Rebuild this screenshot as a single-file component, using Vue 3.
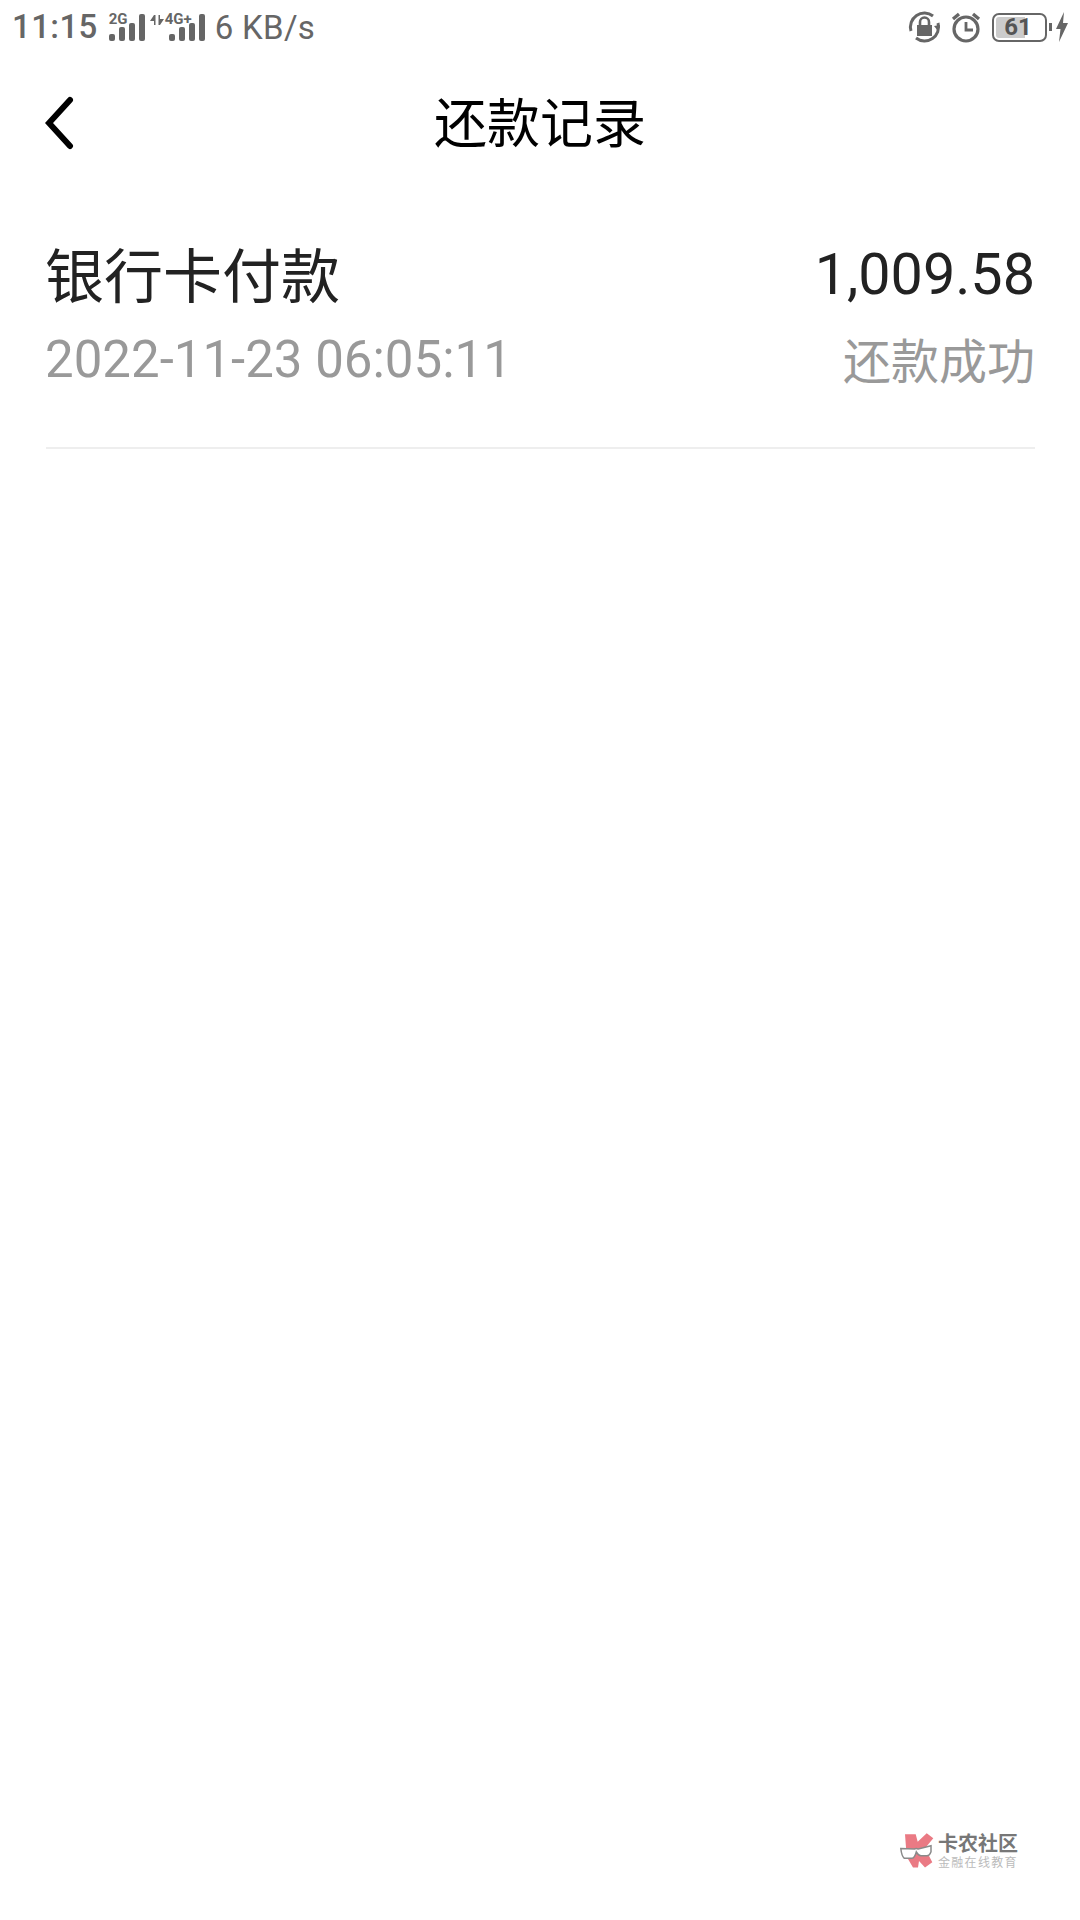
<template>
  <div class="page">
    <div class="status">
      <div class="s-left">
        <span class="time">11:15</span>
        <div class="net">
          <span class="net-label">2G</span>
          <svg class="bars" width="36" height="27" viewBox="0 0 36 27"><rect x="0" y="20" width="6" height="7" rx="2"/><rect x="10" y="13" width="6" height="14" rx="2"/><rect x="20" y="9" width="6" height="18" rx="2"/><rect x="30" y="0" width="6" height="27" rx="2"/></svg>
        </div>
        <div class="net net2">
          <svg class="arrows" width="14" height="12" viewBox="0 0 14 12"><path d="M0 7L4 1h1.500v10H4V7zM14 5L10 11H8.500V1H10v4z" fill="#666"/></svg>
          <span class="net-label label2">4G+</span>
          <svg class="bars" width="36" height="27" viewBox="0 0 36 27"><rect x="0" y="20" width="6" height="7" rx="2"/><rect x="10" y="13" width="6" height="14" rx="2"/><rect x="20" y="9" width="6" height="18" rx="2"/><rect x="30" y="0" width="6" height="27" rx="2"/></svg>
        </div>
        <span class="speed">6 KB/s</span>
      </div>
      <div class="s-right">
        <svg class="i-lock" width="33" height="32" viewBox="0 0 33 32" fill="none"><path d="M3 20A14 14 0 0 1 25 5M30 12A14 14 0 0 1 8 27" stroke="#666" stroke-width="3"/><path d="M26 15l6-1-2 6z" fill="#666"/><rect x="9" y="14" width="15" height="11" fill="#666"/><path d="M12 14v-3a4.500 4.500 0 0 1 9 0v3" stroke="#666" stroke-width="2.600"/></svg>
        <svg class="i-clock" width="30" height="32" viewBox="0 0 30 32" fill="none"><circle cx="15" cy="18" r="12" stroke="#666" stroke-width="3.200"/><path d="M15 11v8h7" stroke="#666" stroke-width="2.800"/><path d="M2 8l6-5M28 8l-6-5" stroke="#666" stroke-width="3.400"/></svg>
        <div class="battery"><div class="fill"></div><span class="level">61</span></div>
        <div class="nub"></div>
        <svg class="i-bolt" width="12" height="30" viewBox="0 0 12 30"><path d="M8 0L0 17h4.500L3 30l9-19H7z" fill="#666"/></svg>
      </div>
    </div>

    <header class="nav">
      <svg class="back" width="32" height="54" viewBox="0 0 32 54" fill="none"><path d="M25 4L4 27l21 23" stroke="#000" stroke-width="6" stroke-linecap="round"/></svg>
      <h1 class="title">还款记录</h1>
    </header>

    <section class="row">
      <div class="line1"><span class="name">银行卡付款</span><span class="amount">1,009.58</span></div>
      <div class="line2"><span class="date">2022-11-23 06:05:11</span><span class="state">还款成功</span></div>
    </section>

    <div class="mark">
      <svg width="34" height="38" viewBox="0 0 34 38"><path d="M5 2.300H15.700L17.700 9.700 26.700 1.300 33.300 6.300 25 16.300 32.300 30.300 25 35.500 19 29 18 35.500H13L6.700 24.700z" fill="#ea7a84"/><path d="M0.800 16.500L14.300 17C15.500 16.300 17 16.300 18.300 17L31 13.700 31 19.700C30 22.500 28.500 23.700 26.700 23.700H21C19 23.700 17.500 22 16.300 20 15.500 23 14 26.300 11.700 26.300H4.300C2.500 25 1.300 21 0.800 16.500Z" fill="#fff" stroke="#8a8a8a" stroke-width="1.500"/></svg>
      <div class="mark-text"><span class="m1">卡农社区</span><span class="m2">金融在线教育</span></div>
    </div>
  </div>
</template>

<script setup>
</script>

<style>
html, body { margin: 0; background: #fff; }
</style>

<style scoped>
.page { width: 1080px; height: 1920px; position: relative; background: #fff; overflow: hidden; font-family: Roboto, "Noto Sans CJK SC", sans-serif; }
.status { height: 54px; display: flex; justify-content: space-between; align-items: center; padding: 0 12px 0 12px; color: #666; }
.s-left { display: flex; align-items: center; }
.time { font-size: 33px; font-weight: 500; letter-spacing: 0.4px; line-height: 54px; }
.net { position: relative; width: 36px; height: 27px; margin-left: 11px; }
.net2 { margin-left: 24px; }
.net-label { position: absolute; left: 0; top: 0; font-size: 15px; font-weight: 700; line-height: 11px; white-space: nowrap; }
.label2 { left: -4px; }
.arrows { position: absolute; left: -19px; top: 0; }
.bars { position: absolute; left: 0; bottom: 0; fill: #666; }
.speed { font-size: 33px; margin-left: 10px; letter-spacing: 0.3px; }
.s-right { display: flex; align-items: center; }
.i-clock { margin-left: 10px; }
.battery { position: relative; width: 51px; height: 25px; border: 2px solid #666; border-radius: 7px; margin-left: 11px; }
.fill { position: absolute; left: 2px; top: 2px; bottom: 2px; width: 29px; background: #ccc; border-radius: 3px 0 0 3px; }
.level { position: absolute; inset: 0; text-align: center; font-size: 24px; font-weight: 700; line-height: 25px; padding-right: 3px; color: #555; }
.nub { width: 3px; height: 8px; background: #666; margin-left: 2px; }
.i-bolt { margin-left: 4px; }
.nav { position: relative; height: 138px; display: flex; align-items: center; justify-content: center; }
.back { position: absolute; left: 45px; top: 42px; }
.title { margin: 3px 0 0; font-size: 53px; font-weight: 400; color: #000; line-height: 70px; }
.row { margin: 0 45px 0 46px; padding-top: 38px; border-bottom: 2px solid #eee; height: 257px; box-sizing: border-box; }
.line1, .line2 { display: flex; justify-content: space-between; align-items: center; }
.line1 { height: 90px; }
.line2 { height: 78px; }
.name { font-size: 59px; color: #222; margin: 0 0 6px -1px; }
.amount { font-size: 57.500px; color: #222; margin-bottom: 2px; }
.date { font-size: 51px; color: #999; margin-left: -1px; }
.state { font-size: 48px; color: #999; margin-bottom: 2px; }
.mark { position: absolute; left: 900px; top: 1832px; display: flex; align-items: center; gap: 4px; }
.mark-text { display: flex; flex-direction: column; }
.m1 { font-size: 20px; line-height: 23px; font-weight: 700; color: #777; }
.m2 { font-size: 12px; line-height: 14px; letter-spacing: 1.300px; color: #bbb; }
</style>
